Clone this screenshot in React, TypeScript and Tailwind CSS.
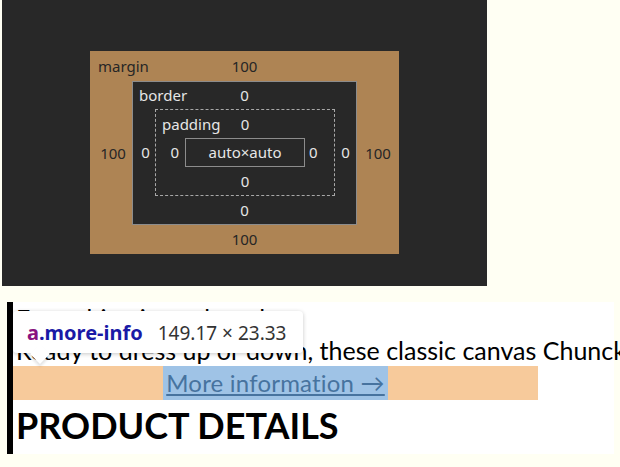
import React from "react";

type LayerProps = {
  label: string;
  top: string;
  bottom: string;
  left: string;
  right: string;
  box: string;
  cols: string;
  rows: string;
  labelPad: string;
  leftCell?: string;
  rightCell?: string;
  children: React.ReactNode;
};

function Layer({ label, top, bottom, left, right, box, cols, rows, labelPad, leftCell, rightCell, children }: LayerProps) {
  return (
    <div className={`grid ${box} ${cols} ${rows}`}>
      <div className="col-span-3 grid grid-cols-[1fr_auto_1fr] items-center">
        <span className={labelPad}>{label}</span>
        <span>{top}</span>
        <span />
      </div>
      <div className={`flex items-center ${leftCell ?? "justify-center"}`}>{left}</div>
      {children}
      <div className={`flex items-center ${rightCell ?? "justify-center"}`}>{right}</div>
      <div className="col-span-3 flex items-center justify-center">{bottom}</div>
    </div>
  );
}

function BoxModel() {
  return (
    <div className="w-[485px] h-[286px] bg-[#282828] flex justify-center pt-[51px] font-['Noto_Sans',sans-serif] text-[15px] leading-none">
      <Layer
        label="margin"
        top="100"
        bottom="100"
        left="100"
        right="100"
        box="w-[309px] h-[203px] bg-[#ae8454] text-[#262626]"
        cols="grid-cols-[42px_1fr_42px]"
        rows="grid-rows-[30px_1fr_29px]"
        labelPad="pl-[8px]"
        leftCell="justify-center pl-[4px]"
        rightCell="justify-center"
      >
        <Layer
          label="border"
          top="0"
          bottom="0"
          left="0"
          right="0"
          box="w-[225px] h-[144px] bg-[#282828] border border-[#8c8c8c] text-[#e6e6e6]"
          cols="grid-cols-[22px_1fr_21px]"
          rows="grid-rows-[27px_1fr_28px]"
          labelPad="pl-[6px]"
          leftCell="justify-center pl-[3px]"
          rightCell="justify-center"
        >
          <Layer
            label="padding"
            top="0"
            bottom="0"
            left="0"
            right="0"
            box="w-[180px] h-[87px] border border-dashed border-[#a8a8a8]"
            cols="grid-cols-[29px_1fr_29px]"
            rows="grid-rows-[28px_1fr_28px]"
            labelPad="pl-[6px]"
            leftCell="justify-end pr-[6px]"
            rightCell="justify-start pl-[4px]"
          >
            <div className="w-[120px] h-[29px] border border-[#8c8c8c] flex items-center justify-center text-[#e6e6e6]">
              auto×auto
            </div>
          </Layer>
        </Layer>
      </Layer>
    </div>
  );
}

export default function App() {
  return (
    <div className="min-h-[467px] w-[620px] overflow-hidden bg-[#fffff3]">
      <div className="pl-[2px]">
        <BoxModel />
      </div>
      <div className="relative mt-[16px] ml-[7px] w-[607px] border-l-[6px] border-black bg-white pb-[4px] font-['Lato',sans-serif] text-black">
        <div className="pl-[3px] text-[25px] leading-[32px] whitespace-nowrap">
          <div>Everything is made to last</div>
          <div>Ready to dress up or down, these classic canvas Chunck Taylors</div>
        </div>
        <div className="w-[525px] h-[34px] bg-[#f7ca9b] flex justify-center">
          <a className="w-[225px] h-[34px] bg-[#9fc3e6] text-[#47739f] text-[24px] tracking-[0.2px] leading-[34px] underline text-center">
            More information →
          </a>
        </div>
        <h2 className="pl-[3px] text-[36px] leading-[50px] font-bold">PRODUCT DETAILS</h2>

        <div className="absolute left-0 top-[9px] w-[290px] h-[42px] bg-white rounded-[4px] shadow-[0_1px_4px_rgba(0,0,0,0.22)] flex items-center pt-[2px] pl-[14px] gap-[15px] font-['Noto_Sans',sans-serif] leading-none">
          <span className="font-bold text-[20px]">
            <span className="text-[#881280]">a</span>
            <span className="text-[#1a1aa6]">.more-info</span>
          </span>
          <span className="text-[#333333] text-[19px]">149.17 × 23.33</span>
          <span className="absolute left-[20px] top-[36px] w-[14px] h-[14px] bg-white rotate-45 shadow-[2px_2px_3px_rgba(0,0,0,0.12)]" />
        </div>
      </div>
    </div>
  );
}
